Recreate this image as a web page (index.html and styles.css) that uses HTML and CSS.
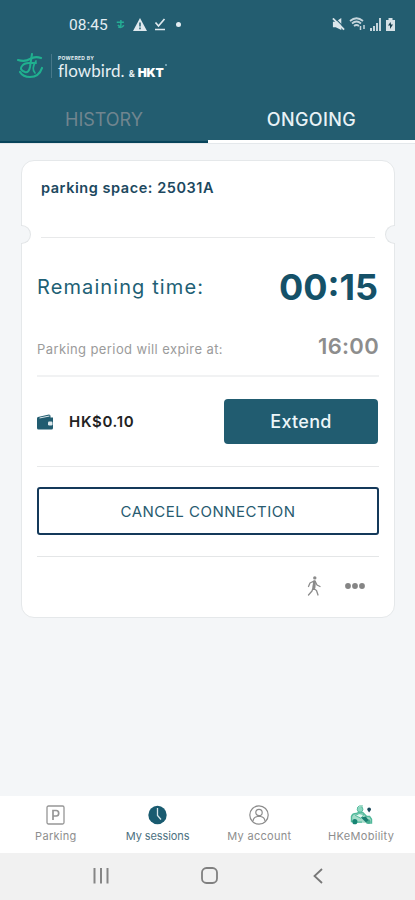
FILE: index.html
```html
<!DOCTYPE html>
<html lang="en">
<head>
<meta charset="utf-8">
<meta name="viewport" content="width=device-width">
<title>My sessions</title>
<link rel="stylesheet" href="styles.css">
</head>
<body>
<header class="header">
  <div class="status">
    <span class="clock">08:45</span>
    <svg class="st-brand" width="9" height="10" viewBox="0 0 24 25" fill="none" stroke="#25ad94" stroke-width="4"><path d="M2 8h19M13 2v14q-3 5-8-1M21 16q-7 9-15 4"/></svg>
    <svg class="st-warn" width="14" height="13" viewBox="0 0 14 13"><path d="M7 0l7 13H0z" fill="#dfe9ee"/><path d="M7 4.500v4M7 9.500v1.700" stroke="#235d70" stroke-width="1.500"/></svg>
    <svg class="st-check" width="12" height="13" viewBox="0 0 12 13" fill="none" stroke="#dfe9ee" stroke-width="1.700"><path d="M1.500 4.500l3 3.500L10.500 1M1 11.500h10"/></svg>
    <i class="dot"></i>
    <span class="st-right">
      <svg width="13" height="13" viewBox="0 0 14 14"><path d="M1 4h3L10 0v13L4 10H1z" fill="#dbe6eb"/><path d="M3 0l12 12" stroke="#235d70" stroke-width="1.200"/><path d="M1 .5l12 12" stroke="#dbe6eb" stroke-width="2"/></svg>
      <svg width="17" height="14" viewBox="0 0 17 14" fill="none" stroke="#c5d5dc" stroke-width="1.700"><path d="M1 4q6.500-5.500 13 0M3 6.500q4.500-4 9 0M5 9q2.500-2 5 0"/><path d="M11.500 9v4M15 8v4" stroke-width="1.500"/></svg>
      <svg width="12" height="13" viewBox="0 0 12 13" fill="#c5d5dc"><path d="M0 10h2v3H0zM3 8h2v5H3zM6 5h2v8H6zM9 0h2v13H9z"/></svg>
      <svg width="9" height="13" viewBox="0 0 9 13"><path d="M2.500 0h4v2H9v11H0V2h2.500z" fill="#d5e1e6"/><path d="M4.500 4L2 7.500h2V11l3-4.500H5z" fill="#183f4e"/></svg>
    </span>
  </div>
  <div class="brand">
    <svg class="logo" width="27" height="26" viewBox="0 0 27 26" fill="none" stroke="#20b08f" stroke-linecap="round"><path d="M1 7q7 2 12-1t11-1" stroke-width="2.200"/><path d="M15 1q-1 6-2 13-1 6-5 5-6-2-3-6 2-3 7-3h7" stroke-width="2"/><path d="M19 8q-5 8-1 12" stroke-width="1.700"/><path d="M25 15q-3 9-12 9-7 0-10-5" stroke-width="2.200"/></svg>
    <i class="brand-rule"></i>
    <div class="brand-text">
      <div class="powered">POWERED BY</div>
      <div class="names"><span class="flow">flowbird.</span><span class="amp">&amp;</span><span class="hkt">HKT</span><i class="mark"></i></div>
    </div>
  </div>
  <nav class="tabs">
    <div class="tab"><span class="t-history">HISTORY</span></div>
    <div class="tab active"><span class="t-ongoing">ONGOING</span></div>
  </nav>
</header>
<main class="main">
  <section class="card">
    <i class="notch left"></i><i class="notch right"></i>
    <div class="space"><span class="t-space">parking space: 25031A</span></div>
    <div class="row remaining"><span class="t-rem">Remaining time:</span><span class="t-timer">00:15</span></div>
    <div class="row expiry"><span class="t-exp">Parking period will expire at:</span><span class="t-until">16:00</span></div>
    <div class="row pay">
      <svg width="16" height="16" viewBox="0 0 16 16"><path d="M1 3L12 .5q1.500 0 1.500 1.500v1.500H16V14q0 1.500-1.500 1.500h-13Q0 15.500 0 14V4.500Q0 3 1 3z" fill="#215c70"/><path d="M2.500 4l10-2" stroke="#dce7eb" stroke-width="1"/><rect x="11" y="7.500" width="4.500" height="4" rx="1.200" fill="#dce7eb"/></svg>
      <span class="t-price">HK$0.10</span>
      <button class="extend"><span>Extend</span></button>
    </div>
    <div class="cancel-row"><button class="cancel"><span>CANCEL CONNECTION</span></button></div>
    <div class="actions">
      <svg width="14" height="20" viewBox="0 0 14 20" fill="none" stroke="#8b8b8b" stroke-width="1.300" stroke-linecap="round" stroke-linejoin="round"><circle cx="7.800" cy="1.900" r="1.700" fill="#8b8b8b" stroke="none"/><path d="M7 5L6 12l3.500 2.500L11 19M6 12l-1 3-3.500 4M7 5L3 7 1.500 10.500M8 5l2 4 3 1.500" /><path d="M7.500 6L7 11.500" stroke-width="2.800"/></svg>
      <svg width="20" height="6" viewBox="0 0 20 6" fill="#858585"><circle cx="3" cy="3" r="2.900"/><circle cx="10" cy="3" r="2.900"/><circle cx="17" cy="3" r="2.900"/></svg>
    </div>
  </section>
</main>
<nav class="bottom">
  <div class="item i1">
    <svg width="19" height="20" viewBox="0 0 19 20" fill="none" stroke="#969696"><rect x="1" y="1" width="17" height="18" rx="1.500" stroke-width="1.300"/><path d="M7 15V5.500h3.200q2.500 0 2.500 2.700T10.200 11H7" stroke-width="1.700"/></svg>
    <span>Parking</span>
  </div>
  <div class="item i2">
    <svg width="19" height="20" viewBox="0 0 19 20"><circle cx="9.500" cy="10" r="9.200" fill="#195b70"/><path d="M9.500 3v7.500l3.500 4" fill="none" stroke="#d5e5e9" stroke-width="1.300"/></svg>
    <span>My sessions</span>
  </div>
  <div class="item i3">
    <svg width="20" height="20" viewBox="0 0 20 20" fill="none" stroke="#8c8c8c" stroke-width="1.200"><circle cx="10" cy="10" r="9.200"/><circle cx="10" cy="7.500" r="3.200"/><path d="M4 16q.5-4 4.500-4.500h3q4 .5 4.500 4.500"/></svg>
    <span>My account</span>
  </div>
  <div class="item i4">
    <svg width="23" height="20" viewBox="0 0 23 21" fill="none"><path d="M1 18v-6q1-3 5-3l2-1h5l4 4h3l2 3v4h-3M6 18h6" fill="#a5dcc9" stroke="#52b99b" stroke-width="1.500"/><circle cx="10" cy="4.500" r="3" fill="#8bd8c0" stroke="#52b99b"/><path d="M7 3l2-2h4M5 11l4-2 5 1-3 4z" stroke="#52b99b" fill="#e3f7f0"/><circle cx="4.500" cy="17.500" r="2.700" fill="#168573"/><circle cx="18.500" cy="17.500" r="2.500" fill="#48ad90"/><path d="M11 13l5-1 3 4-3 2z" fill="#197e70"/><path d="M19.500 8l-2-3q0-2.500 2-2.500t2 2.500z" fill="#17485a"/></svg>
    <span>HKeMobility</span>
  </div>
</nav>
<footer class="system">
  <svg width="16" height="16" viewBox="0 0 16 16" stroke="#858585" stroke-width="2"><path d="M1.500 0v15.500M8 0v15.500M14.500 0v15.500"/></svg>
  <svg class="home" width="17" height="17" viewBox="0 0 17 17" fill="none" stroke="#808080" stroke-width="1.800"><rect x="1" y="1" width="15" height="15" rx="4.500"/></svg>
  <svg width="10" height="16" viewBox="0 0 10 16" fill="none" stroke="#777" stroke-width="1.800"><path d="M9 1L1.500 8 9 15"/></svg>
</footer>
</body>
</html>
```
FILE: styles.css
```css
* { box-sizing: border-box; }
body {
  margin: 0;
  width: 415px;
  height: 900px;
  display: flex;
  flex-direction: column;
  background: #f4f6f8;
  font-family: Inter, "Open Sans", sans-serif;
  overflow: hidden;
}
span, .powered { white-space: nowrap; }
svg { display: block; flex: none; }
.header { height: 143px; background: #235d70; display: flex; flex-direction: column; flex: none; }
.status { height: 48px; display: flex; align-items: center; padding: 0 20px 0 69px; color: #e3edf2; }
.clock { font: 400 15.5px Roboto, sans-serif; width: 39px; margin-top: 2px; }
.st-brand { margin-left: 8px; }
.st-warn { margin-left: 8px; }
.st-check { margin-left: 7px; }
.dot { width: 5px; height: 5px; border-radius: 50%; background: #e3edf2; margin-left: 10px; }
.st-right { display: flex; align-items: center; gap: 4px; margin-left: auto; }
.brand { height: 47px; display: flex; padding: 5px 0 0 17px; }
.brand-rule { width: 1px; height: 24px; background: #47788a; margin: 1px 0 0 7px; }
.brand-text { margin-left: 6px; padding-top: 2px; color: #e6eff3; }
.powered { font-size: 5px; line-height: 6px; font-weight: 700; letter-spacing: 0.3px; }
.names { display: flex; align-items: baseline; line-height: 14px; padding-top: 3px; }
.flow { font-family: Lato, sans-serif; font-size: 17px; letter-spacing: 0.1px; }
.amp { font-size: 9px; font-weight: 700; margin-left: 4px; }
.hkt { font-size: 12px; font-weight: 900; margin-left: 3px; letter-spacing: -0.2px; color: #fff; }
.mark { width: 2px; height: 2px; background: #6f9eb0; align-self: flex-start; margin-left: 1px; }
.tabs { height: 48px; display: flex; }
.tab { width: 208px; display: flex; align-items: center; justify-content: center; border-bottom: 2px solid #08445b; color: #70858f; font-size: 18px; padding-top: 2px; }
.tab.active { width: 207px; color: #e9f2f6; border-bottom: 3px solid #fff; font-weight: 500; padding-top: 3px; letter-spacing: 0.4px; }
.main { flex: 1; padding: 16px 20px 0 21px; border-top: 1px solid #e4e8eb; }
.card { position: relative; height: 458px; background: #fff; border: 1px solid #e5e8ea; border-radius: 13px; padding: 0 15px; display: flex; flex-direction: column; }
.notch { position: absolute; top: 64px; width: 10px; height: 19px; background: #f4f6f8; border: 1px solid #e2e5e7; }
.notch.left { left: -1px; border-left: 0; border-radius: 0 10px 10px 0; }
.notch.right { right: -1px; border-right: 0; border-radius: 10px 0 0 10px; }
.space { height: 77px; margin: 0 4px; padding-top: 16px; border-bottom: 1px solid #e8e9ea; font-size: 14.5px; line-height: 22px; font-weight: 600; letter-spacing: 0.55px; color: #1c4860; }
.row { display: flex; align-items: center; justify-content: space-between; }
.remaining { height: 98px; color: #215f75; padding-bottom: 1px; }
.t-rem { font-size: 20px; letter-spacing: 1.1px; }
.t-timer { font-size: 36px; font-weight: 700; color: #155168; margin-right: 1px; }
.expiry { height: 41px; border-bottom: 2px solid #f1f2f3; padding-bottom: 19px; color: #8d8d8d; }
.t-exp { font-size: 13px; letter-spacing: 0.4px; color: #9b9b9b; padding-top: 5px; }
.t-until { font-size: 22px; font-weight: 600; letter-spacing: 0.3px; }
.pay { height: 90px; border-bottom: 1px solid #e8e9ea; }
.t-price { font-size: 15px; font-weight: 600; letter-spacing: 0.7px; color: #222; margin: 0 auto 0 16px; }
button { padding: 0; font-family: inherit; }
.extend { width: 154px; height: 45px; margin-right: 1px; border: 0; border-radius: 4px; background: #215c70; color: #edf6f9; font-size: 18px; font-weight: 500; letter-spacing: 0.3px; }
.cancel-row { height: 90px; padding-top: 20px; border-bottom: 1px solid #e4e6e7; }
.cancel { width: 100%; height: 48px; border: 2px solid #14395a; border-radius: 3px; background: #fff; color: #285b70; font-size: 15px; letter-spacing: 0.5px; }
.actions { height: 58px; display: flex; align-items: center; justify-content: flex-end; gap: 23px; padding-right: 14px; }
.actions svg:first-child { margin-right: 1px; }
.bottom { height: 57px; background: #fff; display: flex; flex: none; padding: 0 3px 0 5px; }
.item { width: 101.75px; display: flex; flex-direction: column; align-items: center; padding-top: 9px; font-size: 11px; line-height: 14px; letter-spacing: 0.3px; color: #8e8e8e; }
.item span { margin-top: 4px; }
.i2 { color: #4c7180; letter-spacing: -0.1px; }
.system { height: 47px; background: #f1f1f1; display: flex; align-items: center; padding: 0 92px 2px 93px; justify-content: space-between; flex: none; }
.home { margin-right: 4px; }
```
